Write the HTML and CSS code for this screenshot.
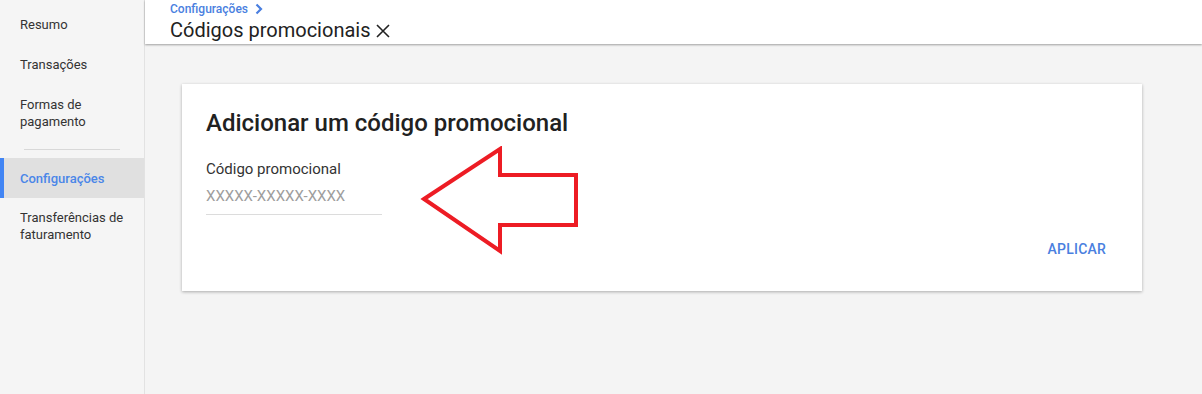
FILE: index.html
```html
<!DOCTYPE html>
<html lang="pt">
<head>
<meta charset="utf-8">
<link rel="stylesheet" href="styles.css">
</head>
<body>
<div class="app">
  <nav class="sidebar">
    <div class="nav-item">Resumo</div>
    <div class="nav-item">Transações</div>
    <div class="nav-item">Formas de<br>pagamento</div>
    <div class="nav-divider"></div>
    <div class="nav-item active">Configurações</div>
    <div class="nav-item">Transferências de<br>faturamento</div>
  </nav>
  <main class="main">
    <header class="header">
      <div class="crumb">Configurações
        <svg class="chev" width="10" height="12" viewBox="0 0 10 12"><path d="M2.5 1.5 L7 6 L2.5 10.5" fill="none" stroke="#4a7fe0" stroke-width="2.2"/></svg>
      </div>
      <div class="title">Códigos promocionais
        <svg class="close" width="16" height="16" viewBox="0 0 16 16"><path d="M2 2 L14 14 M14 2 L2 14" stroke="#222" stroke-width="1.6"/></svg>
      </div>
    </header>
    <section class="content">
      <div class="card">
        <h1 class="card-title">Adicionar um código promocional</h1>
        <div class="field">
          <div class="label">Código promocional</div>
          <div class="input">XXXXX-XXXXX-XXXX</div>
        </div>
        <div class="actions"><span class="btn">APLICAR</span></div>
        <svg class="arrow" width="170" height="120" viewBox="0 0 170 120"><polygon points="4,53 80,3 80,29 156,29 156,79 80,79 80,105" fill="none" stroke="#ed1c24" stroke-width="4" stroke-linejoin="miter"/></svg>
      </div>
    </section>
  </main>
</div>
</body>
</html>
```
FILE: styles.css
```css
* { box-sizing: border-box; }
html, body { margin: 0; padding: 0; }
body {
  font-family: Roboto, "Liberation Sans", Arial, sans-serif;
  background: #f4f4f4;
  width: 1202px;
  height: 394px;
  overflow: hidden;
}
.app { display: flex; height: 394px; }
.sidebar {
  width: 145px;
  flex: none;
  background: #f5f5f5;
  border-right: 1px solid #e2e2e2;
  padding-top: 4px;
}
.nav-item {
  font-size: 13px;
  line-height: 17px;
  color: #333;
  padding: 12px 20px 11px;
  position: relative;
}
.nav-item.active {
  background: #e0e0e0;
  color: #4a86e8;
  font-weight: 500;
}
.nav-item.active::before {
  content: "";
  position: absolute;
  left: 0; top: 0; bottom: 0;
  width: 4px;
  background: #4285f4;
}
.nav-divider {
  height: 1px;
  background: #d8d8d8;
  margin: 8px 24px 8px 24px;
}
.nav-divider + .nav-item + .nav-item { padding-top: 11px; }
.main { flex: 1; display: flex; flex-direction: column; }
.header {
  background: #fff;
  height: 44px;
  padding: 1px 0 0 25px;
  box-shadow: 0 1px 2px rgba(0,0,0,0.35);
  position: relative;
  z-index: 1;
}
.crumb {
  font-size: 12px;
  line-height: 16px;
  color: #4a7fe0;
  font-weight: 500;
  display: flex;
  align-items: center;
  gap: 6px;
}
.title {
  font-size: 20px;
  line-height: 26px;
  color: #222;
  display: flex;
  align-items: center;
  gap: 4px;
}
.close { margin-top: 1px; }
.content { padding: 40px 60px 0 37px; }
.card {
  background: #fff;
  width: 960px;
  height: 207px;
  box-shadow: 0 1px 3px rgba(0,0,0,0.3);
  padding: 22px 24px 0 24px;
  position: relative;
}
.card-title {
  margin: 0;
  font-size: 24px;
  font-weight: 500;
  line-height: 34px;
  color: #212121;
}
.field { margin-top: 20px; width: 176px; }
.label { font-size: 15px; line-height: 19px; color: #333; }
.input {
  margin-top: 8px;
  font-size: 15px;
  line-height: 18px;
  color: #9e9e9e;
  padding-bottom: 9px;
  border-bottom: 1px solid #dcdcdc;
}
.actions { display: flex; justify-content: flex-end; margin-top: 26px; padding-right: 12px; }
.btn { font-size: 14px; font-weight: 500; color: #4a7fe0; letter-spacing: 0.2px; }
.arrow { position: absolute; left: 238px; top: 62px; }
```
